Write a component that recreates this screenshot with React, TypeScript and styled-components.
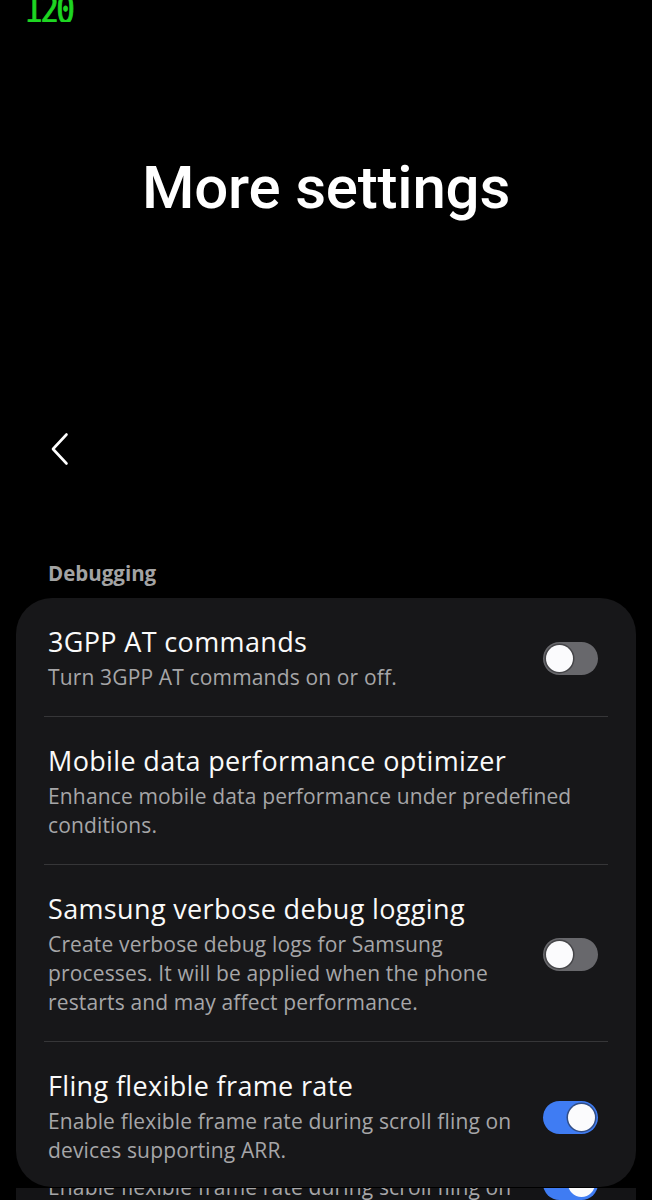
import React, { useState } from "react";
import styled, { createGlobalStyle } from "styled-components";

const GlobalStyle = createGlobalStyle`
  html, body {
    margin: 0;
    padding: 0;
    background: #000;
  }
  body {
    font-family: Roboto, "Noto Sans", "Liberation Sans", sans-serif;
    color: #fff;
    -webkit-font-smoothing: antialiased;
  }
`;

const Screen = styled.div`
  width: 652px;
  height: 1200px;
  overflow: hidden;
  background: #000;
  display: flex;
  flex-direction: column;
`;

const StatusBar = styled.div`
  height: 22px;
  padding-left: 24px;
  overflow: hidden;
  display: flex;
  align-items: flex-end;
`;

const RefreshRate = styled.span`
  font-family: "DejaVu Sans Mono", "Liberation Mono", monospace;
  font-size: 31px;
  font-weight: 400;
  line-height: 20px;
  height: 20px;
  color: #1ed622;
  letter-spacing: -2.5px;
  display: inline-block;
  -webkit-text-stroke: 0.8px #1ed622;
  transform: scaleY(1.25);
  transform-origin: bottom left;
`;

const Hero = styled.header`
  height: 378px;
  display: flex;
  justify-content: center;
  padding-top: 130px;
  box-sizing: border-box;
`;

const Title = styled.h1`
  margin: 0;
  font-size: 60px;
  font-weight: 500;
  line-height: 72px;
  letter-spacing: -0.2px;
  color: #fff;
`;

const TopBar = styled.div`
  height: 148px;
  padding-left: 43px;
  display: flex;
  align-items: flex-start;
  padding-top: 29px;
  box-sizing: border-box;
`;

const BackButton = styled.button`
  width: 34px;
  height: 40px;
  padding: 0;
  border: 0;
  background: none;
  display: flex;
  align-items: center;
  justify-content: center;
  cursor: pointer;
`;

const SectionLabel = styled.div`
  padding: 0 0 0 48px;
  height: 50px;
  font-family: "Open Sans", "Noto Sans", Roboto, sans-serif;
  font-size: 20.5px;
  font-weight: 700;
  line-height: 50px;
  color: #a3a3a3;
`;

const Card = styled.section`
  margin: 0 16px;
  background: #171719;
  border-radius: 36px;
  padding: 0 28px;
  height: 589px;
  box-sizing: border-box;
  display: flex;
  flex-direction: column;
  flex-shrink: 0;
`;

const Row = styled.div<{ $last?: boolean }>`
  display: flex;
  align-items: center;
  gap: 20px;
  padding: 27px 10px 24px 4px;
  border-bottom: ${(p) => (p.$last ? "none" : "1.5px solid #363638")};
  font-family: "Open Sans", "Noto Sans", Roboto, sans-serif;
`;

const RowText = styled.div`
  flex: 1;
  min-width: 0;
`;

const RowTitle = styled.div`
  font-size: 27px;
  line-height: 34px;
  letter-spacing: 0.35px;
  color: #fafafa;
  margin-bottom: 4px;
`;

const RowSub = styled.div`
  font-size: 21px;
  line-height: 29px;
  letter-spacing: 0.15px;
  color: #a6a6a8;
  padding-right: 4px;
`;

const Track = styled.button<{ $on: boolean }>`
  position: relative;
  flex-shrink: 0;
  width: 55px;
  height: 33px;
  padding: 0;
  border: 0;
  border-radius: 17px;
  background: ${(p) => (p.$on ? "#3f7cf3" : "#68686c")};
  cursor: pointer;
`;

const Knob = styled.span<{ $on: boolean }>`
  position: absolute;
  top: 3px;
  left: ${(p) => (p.$on ? "25px" : "3px")};
  width: 27px;
  height: 27px;
  border-radius: 50%;
  background: #fbfbfd;
  box-shadow: 0 0 0 1.5px rgba(40, 40, 44, 0.55);
`;

const Peek = styled.div`
  margin: 1px 16px 0;
  height: 12px;
  overflow: hidden;
  background: #141416;
  display: flex;
  padding: 0 38px 0 32px;
  justify-content: space-between;
  font-family: "Open Sans", "Noto Sans", Roboto, sans-serif;
`;

const PeekText = styled.div`
  font-size: 21px;
  line-height: 29px;
  letter-spacing: 0.15px;
  margin-top: -15px;
  color: #a6a6a8;
`;

const PeekToggle = styled.div`
  width: 55px;
  height: 33px;
  margin-top: -21px;
  border-radius: 17px;
  background: #3f7cf3;
  position: relative;
  &::after {
    content: "";
    position: absolute;
    top: 3px;
    left: 25px;
    width: 27px;
    height: 27px;
    border-radius: 50%;
    background: #fbfbfd;
  }
`;

type Item = { title: string; sub: string; toggle?: boolean; on?: boolean };

const items: Item[] = [
  { title: "3GPP AT commands", sub: "Turn 3GPP AT commands on or off.", toggle: true, on: false },
  { title: "Mobile data performance optimizer", sub: "Enhance mobile data performance under predefined conditions." },
  {
    title: "Samsung verbose debug logging",
    sub: "Create verbose debug logs for Samsung processes. It will be applied when the phone restarts and may affect performance.",
    toggle: true,
    on: false,
  },
  {
    title: "Fling flexible frame rate",
    sub: "Enable flexible frame rate during scroll fling on devices supporting ARR.",
    toggle: true,
    on: true,
  },
];

function Switch({ initial }: { initial: boolean }) {
  const [on, setOn] = useState<boolean>(initial);
  return (
    <Track $on={on} onClick={() => setOn(!on)} aria-pressed={on}>
      <Knob $on={on} />
    </Track>
  );
}

export default function App() {
  return (
    <Screen>
      <GlobalStyle />
      <StatusBar>
        <RefreshRate>120</RefreshRate>
      </StatusBar>
      <Hero>
        <Title>More settings</Title>
      </Hero>
      <TopBar>
        <BackButton aria-label="Back">
          <svg width="20" height="34" viewBox="0 0 20 34" fill="none">
            <path d="M16.5 2.5 L3 17 L16.5 31.5" stroke="#fff" strokeWidth="2.6" strokeLinecap="round" strokeLinejoin="round" />
          </svg>
        </BackButton>
      </TopBar>
      <SectionLabel>Debugging</SectionLabel>
      <Card>
        {items.map((it, i) => (
          <Row key={it.title} $last={i === items.length - 1}>
            <RowText>
              <RowTitle>{it.title}</RowTitle>
              <RowSub>{it.sub}</RowSub>
            </RowText>
            {it.toggle ? <Switch initial={!!it.on} /> : null}
          </Row>
        ))}
      </Card>
      <Peek>
        <PeekText>Enable flexible frame rate during scroll fling on</PeekText>
        <PeekToggle />
      </Peek>
    </Screen>
  );
}
